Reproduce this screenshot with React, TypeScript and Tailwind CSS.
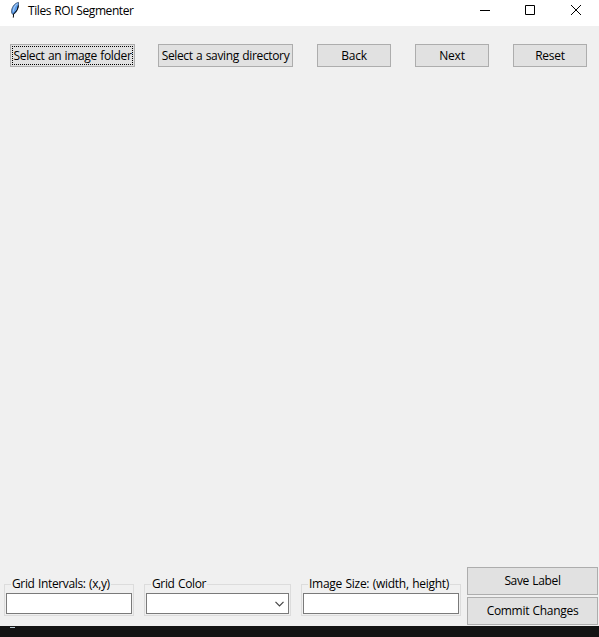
import type { ReactNode } from 'react';

function Button({ className, text, focused = false }: { className: string; text: string; focused?: boolean }) {
  return (
    <button className={`flex shrink-0 items-center justify-center whitespace-nowrap border border-[#adadad] bg-[#e1e1e1] [word-spacing:0.6px] ${className}`}>
      {focused ? (
        <span className="flex h-[19px] w-[121px] items-center justify-center border border-dotted border-black">{text}</span>
      ) : (
        <span>{text}</span>
      )}
    </button>
  );
}

function Group({ className, legendClass, label, children }: { className: string; legendClass: string; label: string; children?: ReactNode }) {
  return (
    <div className={`relative flex h-[32px] shrink-0 flex-col border border-[#dcdcdc] px-px pt-[8px] ${className}`}>
      <span className={`absolute -top-[10px] left-[6px] h-[18px] whitespace-nowrap bg-[#f0f0f0] px-px leading-[18px] ${legendClass}`}>{label}</span>
      <div className="relative flex h-[21px] items-center justify-end border border-[#7a7a7a] bg-white">{children}</div>
    </div>
  );
}

function Feather() {
  return (
    <svg className="ml-[9px] mt-px h-[18px] w-[12px]" viewBox="0 0 12 18">
      <path d="M9.5 1.4C6.6 1.9 3.2 5 2.6 9.5L2.8 12.4L4.2 13.6L7.1 11.2L9.3 6.2Z" fill="#5a9cec" stroke="#2c4260" strokeWidth="0.8" />
      <path d="M8.6 2.6C6.3 4 4.6 7.1 4.3 10.6" fill="none" stroke="#a9ccf4" strokeWidth="1.1" />
      <path d="M9.4 4.5L8.3 8.8L4.6 13L4.3 16.6" fill="none" stroke="#0b0b0b" strokeWidth="1" />
    </svg>
  );
}

export default function App() {
  return (
    <div className="flex h-[637px] w-[599px] flex-col overflow-hidden bg-[#f0f0f0] font-['Open_Sans','Noto_Sans',sans-serif] text-[12px] leading-[16px] tracking-[-0.35px] [word-spacing:0.6px] text-black">
      <header className="flex h-[26px] shrink-0 items-start bg-white">
        <Feather />
        <span className="ml-[7px] mt-[3px] whitespace-nowrap tracking-[-0.43px]">Tiles ROI Segmenter</span>
        <svg className="ml-auto mr-[17px] mt-[4px] h-[12px] w-[103px]" viewBox="0 0 103 12" fill="none" stroke="#000">
          <path d="M1 6.5H11M46.5 1.5H55.5V10.5H46.5Z" />
          <path d="M92 1L102 11M102 1L92 11" />
        </svg>
      </header>

      <nav className="flex h-[41px] shrink-0 items-end pl-[10px]">
        <Button className="h-[23px] w-[125px]" text="Select an image folder" focused />
        <Button className="ml-[23px] h-[23px] w-[135px]" text="Select a saving directory" />
        <Button className="ml-[24px] h-[23px] w-[74px] tracking-[-0.25px]" text="Back" />
        <Button className="ml-[24px] h-[23px] w-[74px] tracking-[-0.25px]" text="Next" />
        <Button className="ml-[24px] h-[23px] w-[74px] tracking-[-0.25px]" text="Reset" />
      </nav>

      <main className="flex-1" />

      <section className="flex h-[59px] shrink-0 items-start pl-[4px]">
        <div className="flex pt-[17px]">
          <Group className="w-[130px]" legendClass="" label="Grid Intervals: (x,y)" />
          <Group className="ml-[10px] w-[147px]" legendClass="" label="Grid Color">
            <svg className="mr-[4px] h-[6px] w-[9px]" viewBox="0 0 9 6" fill="none" stroke="#444" strokeWidth="1.2">
              <path d="M0.5 0.8L4.5 4.8L8.5 0.8" />
            </svg>
          </Group>
          <Group className="ml-[10px] w-[160px]" legendClass="tracking-[-0.27px]" label="Image Size: (width, height)" />
        </div>
        <div className="ml-[6px] flex flex-col gap-[2px]">
          <Button className="h-[28px] w-[131px]" text="Save Label" />
          <Button className="h-[28px] w-[131px] tracking-[-0.3px]" text="Commit Changes" />
        </div>
      </section>

      <footer className="h-[11px] shrink-0 overflow-hidden bg-[#131313]">
        <div className="ml-[10px] mt-px h-px w-[5px] bg-[#b9c9d1]" />
      </footer>
    </div>
  );
}
